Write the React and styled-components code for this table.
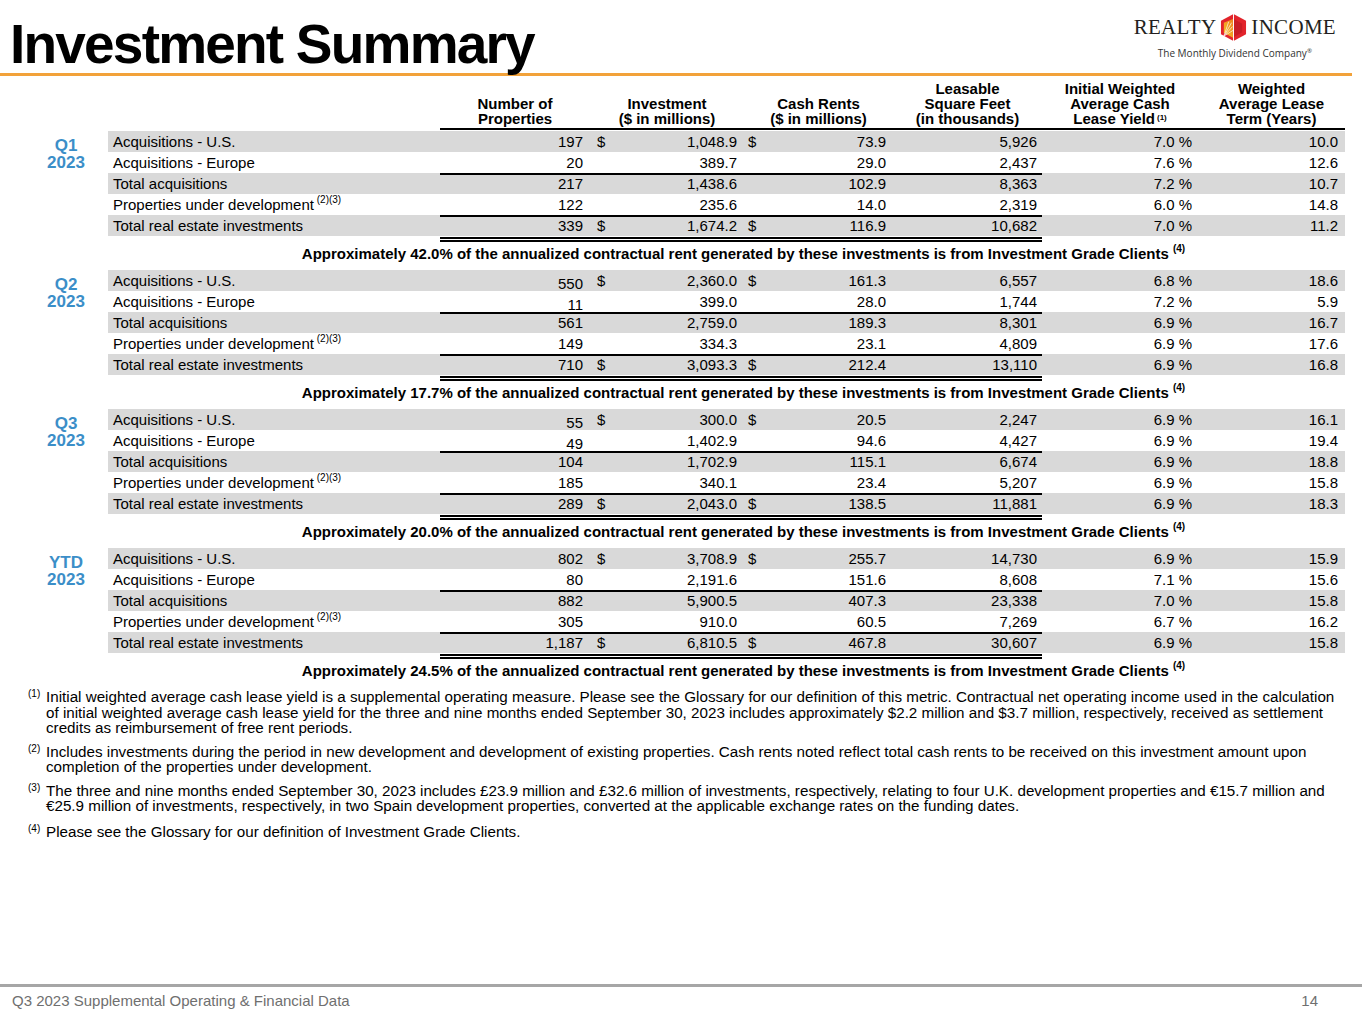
import React from "react"
import styled, { createGlobalStyle } from "styled-components"

const sections = [
  {
    q: "Q1",
    note: "42.0%",
    rows: [
      ["Acquisitions - U.S.", "197", true, "1,048.9", true, "73.9", "5,926", "7.0 %", "10.0"],
      ["Acquisitions - Europe", "20", false, "389.7", false, "29.0", "2,437", "7.6 %", "12.6"],
      ["Total acquisitions", "217", false, "1,438.6", false, "102.9", "8,363", "7.2 %", "10.7"],
      ["Properties under development", "122", false, "235.6", false, "14.0", "2,319", "6.0 %", "14.8"],
      ["Total real estate investments", "339", true, "1,674.2", true, "116.9", "10,682", "7.0 %", "11.2"],
    ],
  },
  {
    q: "Q2",
    note: "17.7%",
    low: true,
    rows: [
      ["Acquisitions - U.S.", "550", true, "2,360.0", true, "161.3", "6,557", "6.8 %", "18.6"],
      ["Acquisitions - Europe", "11", false, "399.0", false, "28.0", "1,744", "7.2 %", "5.9"],
      ["Total acquisitions", "561", false, "2,759.0", false, "189.3", "8,301", "6.9 %", "16.7"],
      ["Properties under development", "149", false, "334.3", false, "23.1", "4,809", "6.9 %", "17.6"],
      ["Total real estate investments", "710", true, "3,093.3", true, "212.4", "13,110", "6.9 %", "16.8"],
    ],
  },
  {
    q: "Q3",
    note: "20.0%",
    low: true,
    rows: [
      ["Acquisitions - U.S.", "55", true, "300.0", true, "20.5", "2,247", "6.9 %", "16.1"],
      ["Acquisitions - Europe", "49", false, "1,402.9", false, "94.6", "4,427", "6.9 %", "19.4"],
      ["Total acquisitions", "104", false, "1,702.9", false, "115.1", "6,674", "6.9 %", "18.8"],
      ["Properties under development", "185", false, "340.1", false, "23.4", "5,207", "6.9 %", "15.8"],
      ["Total real estate investments", "289", true, "2,043.0", true, "138.5", "11,881", "6.9 %", "18.3"],
    ],
  },
  {
    q: "YTD",
    note: "24.5%",
    rows: [
      ["Acquisitions - U.S.", "802", true, "3,708.9", true, "255.7", "14,730", "6.9 %", "15.9"],
      ["Acquisitions - Europe", "80", false, "2,191.6", false, "151.6", "8,608", "7.1 %", "15.6"],
      ["Total acquisitions", "882", false, "5,900.5", false, "407.3", "23,338", "7.0 %", "15.8"],
      ["Properties under development", "305", false, "910.0", false, "60.5", "7,269", "6.7 %", "16.2"],
      ["Total real estate investments", "1,187", true, "6,810.5", true, "467.8", "30,607", "6.9 %", "15.8"],
    ],
  },
]

const headers = [
  ["Number of", "Properties"],
  ["Investment", "($ in millions)"],
  ["Cash Rents", "($ in millions)"],
  ["Leasable", "Square Feet", "(in thousands)"],
  ["Initial Weighted", "Average Cash", "Lease Yield"],
  ["Weighted", "Average Lease", "Term (Years)"],
]

const GlobalStyle = createGlobalStyle`
  body {
    margin: 0;
    background: #fff;
    font-family: "Liberation Sans", Arial, sans-serif;
    color: #000;
  }
`

function Logo() {
  return (
    <LogoWrap>
      <LogoTop>
        <span>REALTY</span>
        <svg width="27" height="29" viewBox="0 0 28 30">
          <defs>
            <linearGradient id="sun" x1="0" y1="1" x2="1" y2="0">
              <stop offset="0" stopColor="#f7c325" />
              <stop offset="1" stopColor="#ef7d1f" />
            </linearGradient>
          </defs>
          <polygon points="14,1 27,8 27,22 14,29 1,22 1,8" fill="#e2242b" />
          <polygon points="14,6 14,26 4,20.5 4,10" fill="url(#sun)" />
          <polygon points="14,6 23,11 23,20 14,25" fill="#c81d25" />
          <g stroke="#fff" strokeWidth="0.8" opacity="0.85">
            <line x1="4" y1="24" x2="12" y2="10" />
            <line x1="4" y1="24" x2="13" y2="14" />
            <line x1="4" y1="24" x2="13.5" y2="18" />
            <line x1="4" y1="24" x2="9" y2="9" />
          </g>
          <line x1="14" y1="1" x2="14" y2="29" stroke="#fff" strokeWidth="1" />
        </svg>
        <span>INCOME</span>
      </LogoTop>
      <Tagline>
        The Monthly Dividend Company<sup>®</sup>
      </Tagline>
    </LogoWrap>
  )
}

function Section({ data }) {
  return (
    <SectionBlock>
      <Period>
        {data.q}
        <br />
        2023
      </Period>
      <Rows>
        {data.rows.map((r, i) => {
          const rule = i === 2 || i === 4
          return (
            <Row key={i} $shade={i % 2 === 0}>
              <Label>
                {r[0]}
                {i === 3 && <Sup> (2)(3)</Sup>}
              </Label>
              <Num $rule={rule} $low={data.low && i < 2}>
                {r[1]}
              </Num>
              <Num $rule={rule}>
                {r[2] && <Dollar>$</Dollar>}
                {r[3]}
              </Num>
              <Num $rule={rule}>
                {r[4] && <Dollar $left={4}>$</Dollar>}
                {r[5]}
              </Num>
              <Num $rule={rule} $pad={5}>
                {r[6]}
              </Num>
              <Num $pad={6}>{r[7]}</Num>
              <Num>{r[8]}</Num>
            </Row>
          )
        })}
        <DoubleRule />
        <Note>
          Approximately {data.note} of the annualized contractual rent generated by these
          investments is from Investment Grade Clients <Sup>(4)</Sup>
        </Note>
      </Rows>
    </SectionBlock>
  )
}

export default function App() {
  return (
    <>
      <GlobalStyle />
      <Page>
        <Header>
          <Title>Investment Summary</Title>
          <Logo />
        </Header>
        <HeadRow>
          <span />
          {headers.map((lines, i) => (
            <ColHead key={i}>
              {lines.map((l, j) => (
                <HeadLine key={j}>
                  {l}
                  {i === 4 && j === 2 && <HeadSup>(1)</HeadSup>}
                </HeadLine>
              ))}
            </ColHead>
          ))}
        </HeadRow>
        <Sections>
          {sections.map((s) => (
            <Section key={s.q} data={s} />
          ))}
        </Sections>
        <Notes>
          <Foot>
            <FootMark>(1)</FootMark>
            <FootText>
              Initial weighted average cash lease yield is a supplemental operating measure. Please
              see the Glossary for our definition of this metric. Contractual net operating income
              used in the calculation
              <br />
              of initial weighted average cash lease yield for the three and nine months ended
              September 30, 2023 includes approximately $2.2 million and $3.7 million, respectively,
              received as settlement
              <br />
              credits as reimbursement of free rent periods.
            </FootText>
          </Foot>
          <Foot>
            <FootMark>(2)</FootMark>
            <FootText>
              Includes investments during the period in new development and development of existing
              properties. Cash rents noted reflect total cash rents to be received on this
              investment amount upon
              <br />
              completion of the properties under development.
            </FootText>
          </Foot>
          <Foot>
            <FootMark>(3)</FootMark>
            <FootText>
              The three and nine months ended September 30, 2023 includes £23.9 million and £32.6
              million of investments, respectively, relating to four U.K. development properties and
              €15.7 million and
              <br />
              €25.9 million of investments, respectively, in two Spain development properties,
              converted at the applicable exchange rates on the funding dates.
            </FootText>
          </Foot>
          <Foot $extra={2}>
            <FootMark>(4)</FootMark>
            <FootText>Please see the Glossary for our definition of Investment Grade Clients.</FootText>
          </Foot>
        </Notes>
        <Footer>
          <span>Q3 2023 Supplemental Operating &amp; Financial Data</span>
          <span>14</span>
        </Footer>
      </Page>
    </>
  )
}

const Page = styled.div`
  width: 1365px;
  height: 1024px;
  display: flex;
  flex-direction: column;
  overflow: hidden;
`

const Header = styled.div`
  width: 1352px;
  height: 73px;
  display: flex;
  justify-content: space-between;
  align-items: flex-start;
  border-bottom: 3px solid #f2a23a;
`

const Title = styled.h1`
  margin: 17px 0 0 10px;
  font-size: 55px;
  line-height: 55px;
  font-weight: 700;
  letter-spacing: -1.8px;
`

const LogoWrap = styled.div`
  margin: 13px 16px 0 0;
  display: flex;
  flex-direction: column;
  align-items: center;
`

const LogoTop = styled.div`
  display: flex;
  align-items: center;
  gap: 4px;
  font-family: "Liberation Serif", "DejaVu Serif", serif;
  font-size: 21px;
  letter-spacing: 0.3px;
  color: #231f20;
`

const Tagline = styled.div`
  margin-top: 4px;
  font-family: "Open Sans", "Liberation Sans", sans-serif;
  font-size: 10px;
  color: #333;
  sup {
    font-size: 6px;
  }
`

const grid = `
  display: grid;
  grid-template-columns: 332px 150px 154px 149px 149px 156px 147px;
`

const HeadRow = styled.div`
  ${grid}
  margin: 5px 0 0 108px;
  width: 1237px;
  align-items: end;
  & > *:not(:first-child) {
    border-bottom: 2px solid #000;
  }
`

const ColHead = styled.div`
  padding-bottom: 2px;
  height: 45px;
  display: flex;
  flex-direction: column;
  justify-content: flex-end;
  text-align: center;
  font-weight: 700;
  font-size: 15px;
  line-height: 15px;
`

const HeadLine = styled.div`
  white-space: nowrap;
`

const HeadSup = styled.span`
  margin-left: 2px;
  font-size: 8px;
  line-height: 8px;
  vertical-align: 4px;
`

const Sections = styled.div`
  padding-top: 1px;
`

const SectionBlock = styled.div`
  display: grid;
  grid-template-columns: 108px 1237px;
`

const Period = styled.div`
  padding: 6px 0 0 24px;
  text-align: center;
  color: #3b8ec8;
  font-weight: 700;
  font-size: 17px;
  line-height: 17px;
`

const Rows = styled.div`
  display: flex;
  flex-direction: column;
`

const Row = styled.div`
  ${grid}
  height: 21px;
  background: ${(p) => (p.$shade ? "#d9d9d9" : "#fff")};
  font-size: 15px;
  line-height: 21px;
`

const Label = styled.div`
  padding-left: 5px;
  white-space: nowrap;
`

const Num = styled.div`
  text-align: right;
  padding-right: ${(p) => p.$pad ?? 7}px;
  padding-top: ${(p) => (p.$low ? 3 : 0)}px;
  box-shadow: ${(p) => (p.$rule ? "inset 0 2px 0 #000" : "none")};
  white-space: nowrap;
`

const Dollar = styled.span`
  float: left;
  padding-left: ${(p) => p.$left ?? 7}px;
`

const Sup = styled.sup`
  font-size: 10px;
  line-height: 0;
  vertical-align: 7px;
`

const DoubleRule = styled.div`
  margin: 1px 0 0 332px;
  width: 602px;
  height: 1px;
  border-top: 2px solid #000;
  border-bottom: 2px solid #000;
`

const Note = styled.div`
  margin: 3px 0 7px;
  padding-left: 34px;
  text-align: center;
  font-size: 15px;
  line-height: 18px;
  font-weight: 700;
  white-space: nowrap;
`

const Notes = styled.div`
  margin-top: 2px;
  display: flex;
  flex-direction: column;
  gap: 8px;
  font-size: 15px;
  line-height: 15.5px;
`

const Foot = styled.div`
  display: grid;
  grid-template-columns: 46px 1300px;
  margin-top: ${(p) => p.$extra ?? 0}px;
`

const FootMark = styled.span`
  padding-left: 28px;
  font-size: 10px;
  line-height: 10px;
`

const FootText = styled.div`
  white-space: nowrap;
  font-size: 15.2px;
`

const Footer = styled.div`
  margin-top: auto;
  height: 40px;
  width: 1362px;
  box-sizing: border-box;
  border-top: 3px solid #a6a6a6;
  display: flex;
  justify-content: space-between;
  align-items: flex-start;
  padding: 5px 44px 0 12px;
  font-size: 15px;
  line-height: 18px;
  color: #6f6f6f;
`
